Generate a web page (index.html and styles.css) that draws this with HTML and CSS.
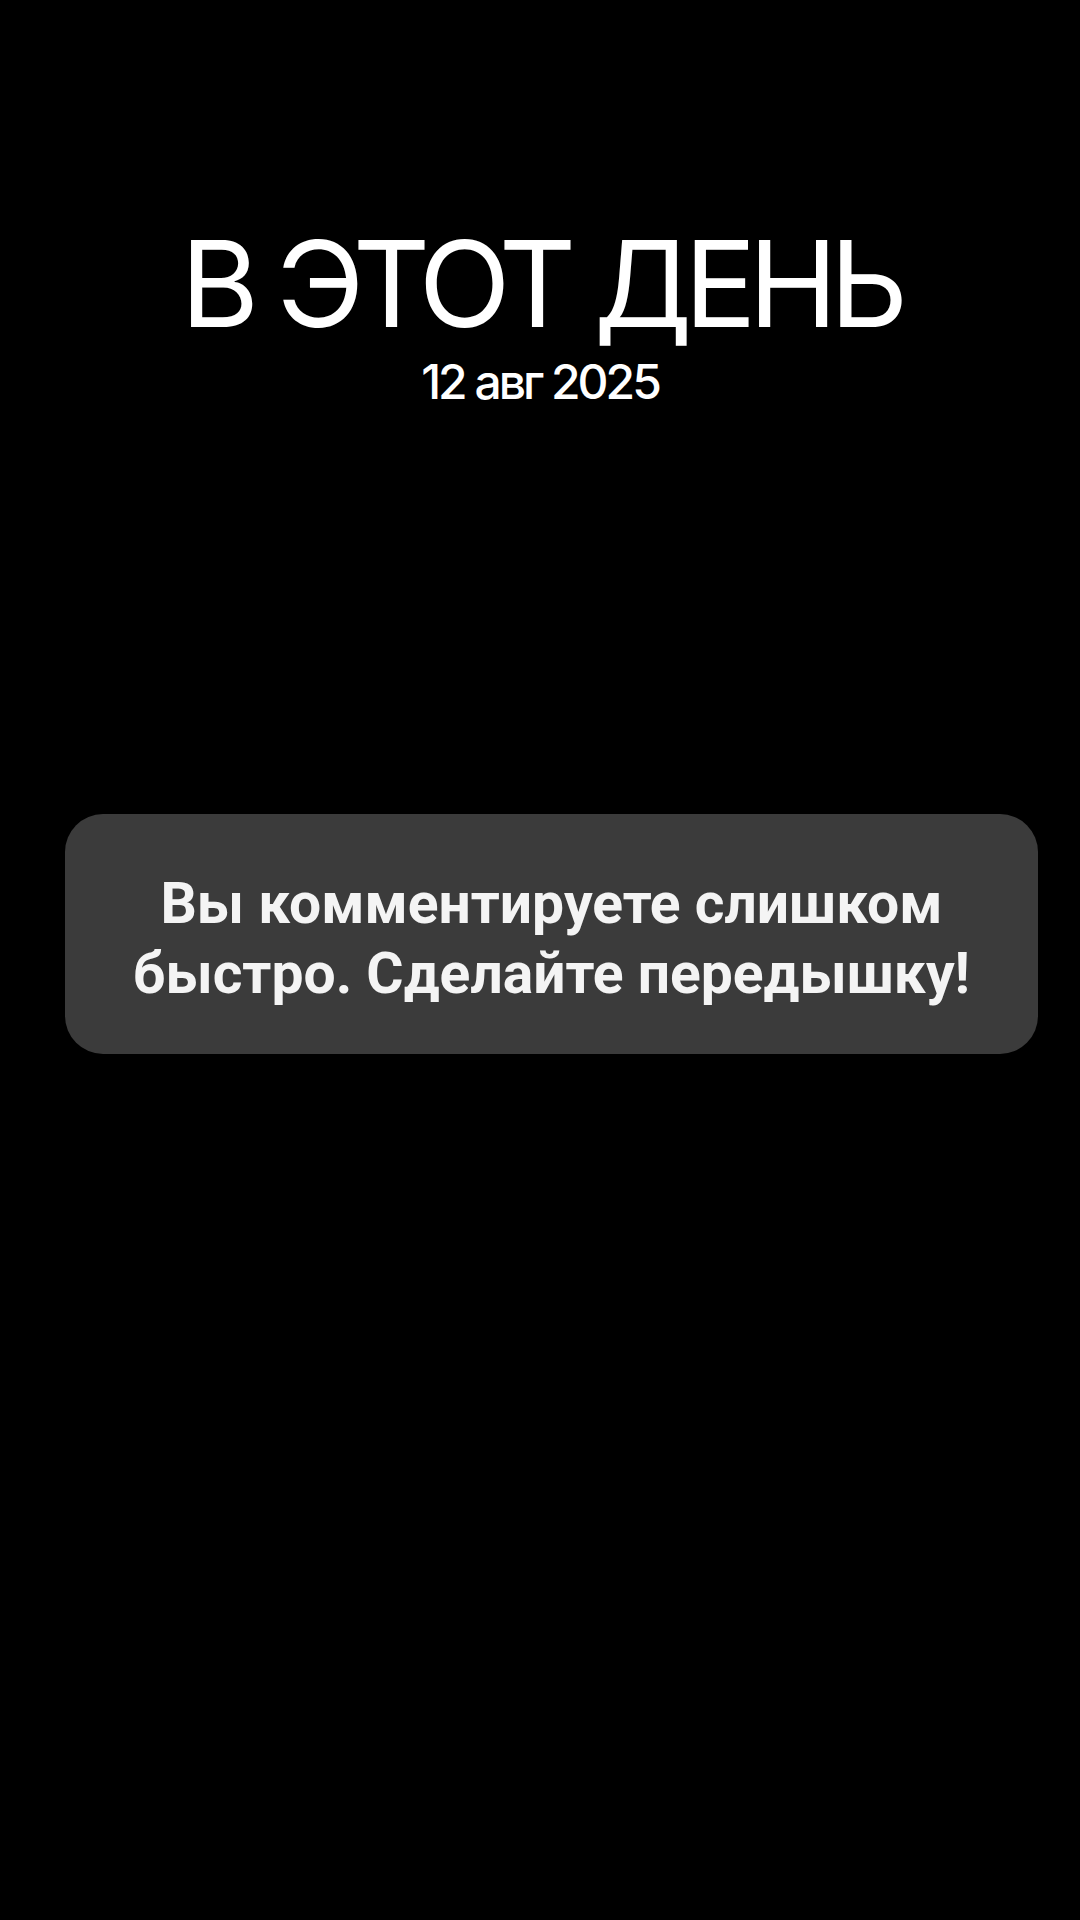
FILE: index.html
```html
<!DOCTYPE html>
<html lang="ru">
<head>
<meta charset="utf-8">
<title>В этот день</title>
<link rel="stylesheet" href="styles.css">
</head>
<body>
<main class="screen">
  <header class="heading">
    <h1 class="title">В ЭТОТ ДЕНЬ</h1>
    <p class="date">12 авг 2025</p>
  </header>
  <div class="toast">
    <p class="toast-text">Вы комментируете слишком<br>быстро. Сделайте передышку!</p>
  </div>
</main>
</body>
</html>
```
FILE: styles.css
```css
html, body {
  margin: 0;
  padding: 0;
  background: #000;
}
.screen {
  width: 1080px;
  height: 1920px;
  background: #000;
  display: flex;
  flex-direction: column;
  overflow: hidden;
}
.heading {
  padding-top: 224px;
  display: flex;
  flex-direction: column;
  align-items: center;
  color: #fff;
}
.title {
  margin: 0;
  font-family: Inter, "Noto Sans", sans-serif;
  font-weight: 400;
  font-size: 120px;
  line-height: 120px;
  letter-spacing: -8px;
}
.date {
  margin: 14px 0 0;
  font-family: Inter, "Noto Sans", sans-serif;
  font-weight: 500;
  font-size: 48px;
  line-height: 48px;
  letter-spacing: -3px;
}
.toast {
  margin: 408px 42px 0 65px;
  height: 240px;
  box-sizing: border-box;
  padding-top: 10px;
  background: #3b3b3b;
  border-radius: 38px;
  display: flex;
  align-items: center;
  justify-content: center;
}
.toast-text {
  margin: 0;
  font-family: Roboto, "Liberation Sans", sans-serif;
  font-weight: 700;
  font-size: 57px;
  line-height: 70px;
  color: #f4f4f4;
  text-align: center;
}
```
